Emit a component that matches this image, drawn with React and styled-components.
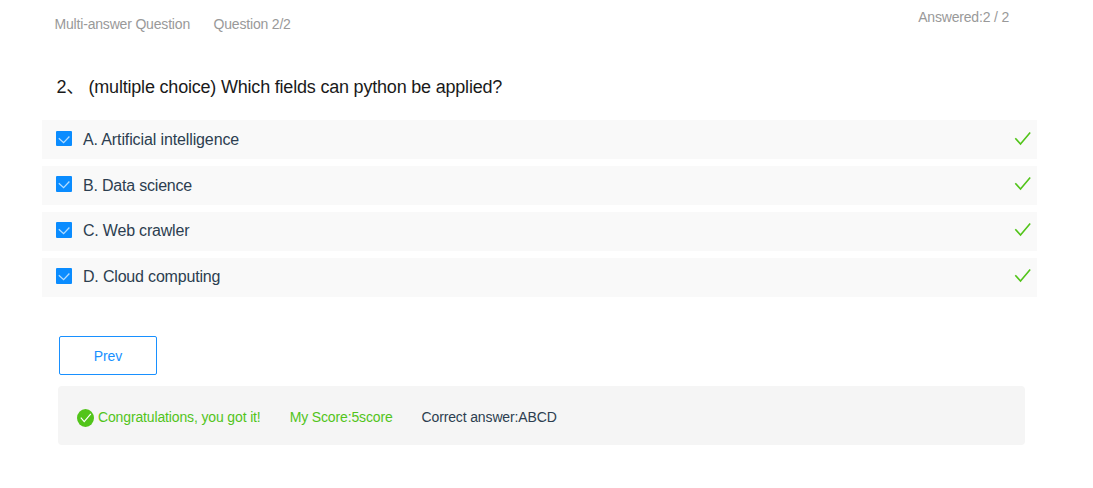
import React from "react";
import styled, { createGlobalStyle } from "styled-components";

const GlobalStyle = createGlobalStyle`
  * { box-sizing: border-box; }
  body {
    margin: 0;
    background: #fff;
    color: #2c3e50;
    font-family: "Liberation Sans", Arial, "Noto Sans CJK SC", sans-serif;
    font-size: 14px;
  }
`;

const Page = styled.main`
  width: 1093px;
  height: 488px;
  overflow: hidden;
  padding: 0 56px 0 42px;
`;

const Header = styled.header`
  display: flex;
  height: 74px;
  padding: 7px 28px 0 12.5px;
  color: #999;
  line-height: 20px;
  letter-spacing: -0.18px;
  white-space: nowrap;
`;

const Meta = styled.span`
  margin-top: 7px;
  margin-right: 23.5px;
`;

const Answered = styled.span`
  margin-left: auto;
`;

const Title = styled.h1`
  display: flex;
  margin: 0;
  height: 46px;
  padding-left: 14.5px;
  color: #1a1a1a;
  font-size: 18px;
  font-weight: 400;
  line-height: 26px;
  letter-spacing: -0.2px;
  white-space: nowrap;
`;

const TitleNumber = styled.span`
  width: 32px;
`;

const Options = styled.ul`
  display: flex;
  flex-direction: column;
  gap: 7px;
  margin: 0;
  padding: 0;
  list-style: none;
`;

const Option = styled.li`
  display: flex;
  align-items: center;
  height: 39px;
  padding: 0 6px 0 14px;
  background: #f9f9f9;
  font-size: 16px;
`;

const Checkbox = styled.span`
  display: flex;
  width: 16px;
  height: ${(p) => (p.$first ? 15 : 16)}px;
  margin-right: 11px;
  margin-bottom: ${(p) => (p.$first ? 2 : 3)}px;
  border-radius: 1px;
  background: #0a8cff;
`;

const OptionLabel = styled.span`
  flex: 1;
  padding-bottom: ${(p) => p.$lift || 0}px;
  letter-spacing: ${(p) => p.$spacing};
`;

const CorrectMark = styled.svg`
  margin-bottom: ${(p) => (p.$first ? 3 : 5)}px;
`;

const PrevButton = styled.button`
  display: block;
  width: 98px;
  height: 39px;
  margin: 39px 0 0 17px;
  padding: 1px 0 0;
  border: 1px solid #1890ff;
  border-radius: 2px;
  background: #fff;
  color: #1890ff;
  font: inherit;
  letter-spacing: -0.1px;
`;

const Result = styled.section`
  display: flex;
  align-items: center;
  width: 967px;
  height: 59px;
  margin: 11px 0 0 16px;
  padding: 3px 19px 0;
  border-radius: 4px;
  background: #f5f5f5;
  white-space: nowrap;
`;

const ResultText = styled.span`
  margin-right: 29px;
  color: ${(p) => (p.$success ? "#52c41a" : "#2c3e50")};
  letter-spacing: -0.14px;
`;

const StatusIcon = styled.svg`
  flex: none;
  margin: 1px 4px 0 0;
`;

const options = [
  { text: "A. Artificial intelligence", spacing: "-0.12px" },
  { text: "B. Data science", spacing: "-0.2px" },
  { text: "C. Web crawler", spacing: "-0.2px", lift: 2 },
  { text: "D. Cloud computing", spacing: "-0.18px", lift: 2 },
];

export default function App() {
  return (
    <>
      <GlobalStyle />
      <Page>
        <Header>
          <Meta>Multi-answer Question</Meta>
          <Meta>Question 2/2</Meta>
          <Answered>Answered:2 / 2</Answered>
        </Header>
        <Title>
          <TitleNumber>2、</TitleNumber>
          <span>(multiple choice) Which fields can python be applied?</span>
        </Title>
        <Options>
          {options.map((o, i) => (
            <Option key={o.text}>
              <Checkbox $first={i === 0}>
                <svg width="16" height="16" viewBox="0 0 16 16" fill="none">
                  <path d="M2.8 7.3 L7.6 11.7 L13.4 5.5" stroke="#b5ddff" strokeWidth="1.3" />
                </svg>
              </Checkbox>
              <OptionLabel $spacing={o.spacing} $lift={o.lift}>{o.text}</OptionLabel>
              <CorrectMark $first={i === 0} width="18" height="16" viewBox="0 0 18 16" fill="none">
                <path d="M2.3 8.2 L7.5 14 L17.2 2.6" stroke="#52c41a" strokeWidth="1.6" />
              </CorrectMark>
            </Option>
          ))}
        </Options>
        <PrevButton>Prev</PrevButton>
        <Result>
          <StatusIcon width="17" height="18" viewBox="0 0 17 18" fill="none">
            <ellipse cx="8.5" cy="9" rx="8.5" ry="9" fill="#52c41a" />
            <path d="M3.8 8.6 L7.2 12.6 L13.8 4.8" stroke="#fff" strokeWidth="1.2" />
          </StatusIcon>
          <ResultText $success>Congratulations, you got it!</ResultText>
          <ResultText $success>My Score:5score</ResultText>
          <ResultText>Correct answer:ABCD</ResultText>
        </Result>
      </Page>
    </>
  );
}
